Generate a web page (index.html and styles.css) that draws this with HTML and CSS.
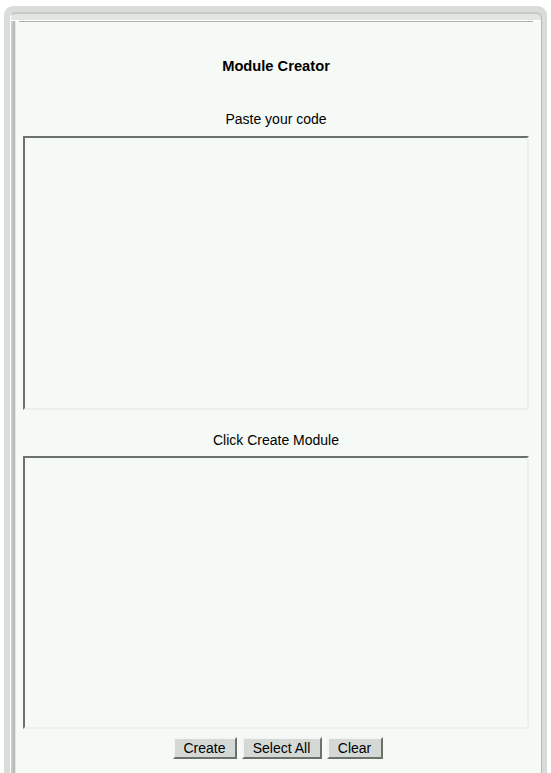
FILE: index.html
```html
<!DOCTYPE html>
<html>
<head>
<meta charset="utf-8">
<title>Module Creator</title>
<link rel="stylesheet" href="styles.css">
</head>
<body>
<div class="outer">
  <div class="inner">
    <div class="panel">
      <div class="rule"></div>
      <div class="title">Module Creator</div>
      <div class="label label-first">Paste your code</div>
      <textarea class="code code-in"></textarea>
      <div class="label label-second">Click Create Module</div>
      <textarea class="code code-out"></textarea>
      <div class="buttons">
        <button class="btn btn-create">Create</button>
        <button class="btn btn-select">Select All</button>
        <button class="btn btn-clear">Clear</button>
      </div>
    </div>
  </div>
</div>
</body>
</html>
```
FILE: styles.css
```css
html, body {
  margin: 0;
  padding: 0;
  background: #ffffff;
  height: 773px;
  overflow: hidden;
}

body {
  font-family: "Liberation Sans", Arial, sans-serif;
  font-size: 14px;
  color: #000;
}

.outer {
  margin: 6px 0 0 4px;
  width: 543px;
  height: 767px;
  box-sizing: border-box;
  background: #d9ddd9;
  border-radius: 9px 9px 0 0;
  padding: 6px 5px 0 6px;
  display: flex;
  flex-direction: column;
}

.inner {
  flex: 1;
  display: flex;
  flex-direction: column;
  border-top: 2px solid #c5c9c5;
  border-left: 1px solid #ffffff;
  border-right: 1px solid #b3b8b3;
  border-radius: 6px 6px 0 0;
  background: #e2e5e2;
  padding-top: 6px;
}

.panel {
  flex: 1;
  display: flex;
  flex-direction: column;
  align-items: center;
  background: #f6faf6;
  border-top: 1px solid #ffffff;
  box-shadow: inset 2px 0 0 #c8ccc8, inset 4px 0 0 #b8bcb8, inset 5px 0 0 #e4e7e4;
}

.rule {
  align-self: stretch;
  height: 1px;
  background: #a9aea9;
  margin: 0 8px 0 8px;
}

.title {
  margin-top: 36px;
  height: 17px;
  line-height: 17px;
  font-weight: bold;
  font-size: 14.7px;
}

.label {
  height: 17px;
  line-height: 17px;
}

.label-first {
  margin-top: 36px;
}

.label-second {
  margin-top: 22px;
}

.code {
  display: block;
  box-sizing: border-box;
  width: 506px;
  margin: 0;
  padding: 2px;
  resize: none;
  background: #f6faf6;
  border-style: solid;
  border-width: 2px;
  border-color: #6a726a #eeefee #eeefee #6a726a;
  outline: none;
  font-family: "Liberation Mono", monospace;
  font-size: 13px;
}

.code-in {
  margin-top: 8px;
  height: 274px;
}

.code-out {
  margin-top: 7px;
  height: 273px;
}

.buttons {
  margin-top: 8px;
  display: flex;
  gap: 5px;
  margin-left: 3px;
}

.btn {
  height: 22px;
  box-sizing: border-box;
  padding: 0;
  font-family: "Liberation Sans", Arial, sans-serif;
  font-size: 14px;
  color: #000;
  background: #d5d9d5;
  border-style: solid;
  border-width: 2px;
  border-color: #f4f6f4 #6a726a #6a726a #f4f6f4;
  line-height: 17px;
}

.btn-create { width: 64px; }
.btn-select { width: 80px; }
.btn-clear { width: 56px; }
```
